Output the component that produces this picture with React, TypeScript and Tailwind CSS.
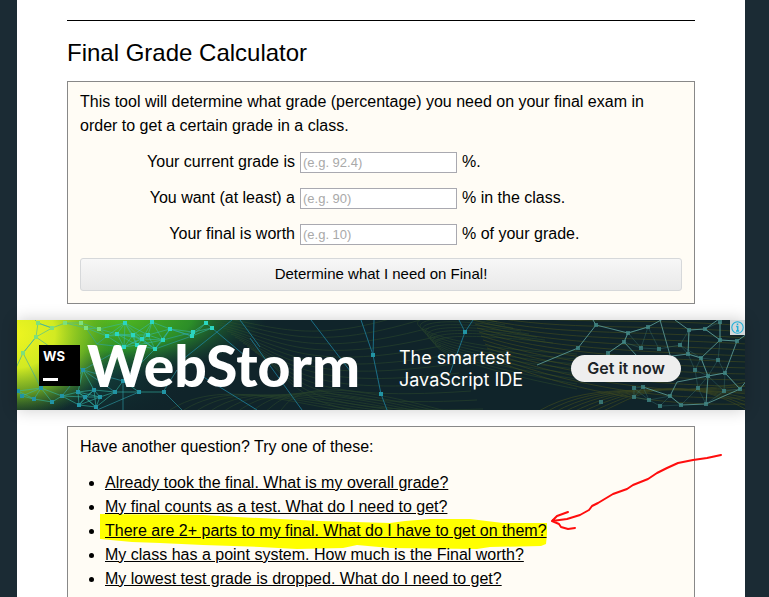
import type { ReactNode } from 'react';

type Point = [number, number];

const LEFT_NODES: Point[] = [
  [21, 3], [19, 17], [6, 33], [35, 8], [48, 3], [64, 3], [69, 8], [82, 9], [90, 16], [100, 14],
  [108, 3], [116, 15], [125, 19], [131, 15], [135, 2], [153, 9], [146, 20], [138, 29], [107, 27],
  [120, 25], [175, 16], [176, 12], [189, 3], [195, 8], [1, 71], [5, 76], [17, 79], [24, 68],
  [35, 82], [45, 76], [61, 72], [68, 77], [79, 87], [83, 77], [62, 85], [98, 72], [106, 61],
  [122, 72], [147, 72], [77, 70], [66, 50],
];

const RIGHT_NODES: Point[] = [
  [579, 5], [561, 28], [611, 13], [631, 7], [607, 22], [591, 33], [624, 28], [642, 29], [672, 10],
  [688, 9], [703, 20], [720, 21], [703, 2], [671, 34], [684, 38], [663, 25], [701, 40], [678, 50],
  [691, 56], [708, 53], [723, 69], [707, 71], [681, 68], [689, 84], [653, 76], [626, 67], [617, 77],
  [617, 68], [643, 86], [664, 85], [584, 82], [632, 80],
];

const MIDDLE_NODES: Point[] = [[356, 35], [364, 74], [448, 12]];

// Joins every pair of nodes that lie closer than `reach`
function meshPath(nodes: Point[], reach: number) {
  let d = '';
  nodes.forEach(([x1, y1], i) => {
    nodes.slice(i + 1).forEach(([x2, y2]) => {
      if (Math.hypot(x2 - x1, y2 - y1) < reach) d += `M${x1} ${y1}L${x2} ${y2}`;
    });
  });
  return d;
}

const range = (n: number) => Array.from({ length: n }, (_, i) => i);

function BannerArt() {
  return (
    <svg className="absolute inset-0 h-full w-full" viewBox="0 0 728 90" preserveAspectRatio="xMinYMid slice" aria-hidden="true">
      <defs>
        <radialGradient id="yellow" gradientUnits="userSpaceOnUse" cx="0" cy="0" r="1" gradientTransform="translate(-4 14) scale(105 86)">
          <stop offset="0" stopColor="#f0f520" />
          <stop offset="0.4" stopColor="#d2ea22" />
          <stop offset="0.7" stopColor="#7fbe20" stopOpacity="0.75" />
          <stop offset="1" stopColor="#3a8a22" stopOpacity="0" />
        </radialGradient>
        <radialGradient id="green" gradientUnits="userSpaceOnUse" cx="0" cy="0" r="1" gradientTransform="translate(85 -4) scale(165 62)">
          <stop offset="0" stopColor="#5cc41e" />
          <stop offset="0.55" stopColor="#2f9a28" stopOpacity="0.9" />
          <stop offset="1" stopColor="#14503a" stopOpacity="0" />
        </radialGradient>
        <radialGradient id="teal" gradientUnits="userSpaceOnUse" cx="0" cy="0" r="1" gradientTransform="translate(60 50) scale(120 60)">
          <stop offset="0" stopColor="#125046" />
          <stop offset="1" stopColor="#10242a" stopOpacity="0" />
        </radialGradient>
      </defs>
      <rect width="728" height="90" fill="#10242a" />
      <rect width="200" height="90" fill="url(#teal)" />
      <rect width="260" height="90" fill="url(#green)" />
      <rect width="120" height="90" fill="url(#yellow)" />

      {/* Contour lines */}
      <g fill="none" stroke="#35552c" strokeWidth="0.7" opacity="0.6">
        {range(13).map(i => (
          <path key={i} d={`M${190 + i * 4} ${-4 + i * 3}C${250 + i * 3} ${2 + i * 5} ${290 - i * 2} ${30 + i * 6} ${400 + i * 6} ${-10 + i * 9}`} />
        ))}
        {range(9).map(i => (
          <path key={i} d={`M${150 + i * 14} 92C${210 + i * 8} ${50 + i * 4} ${300 - i * 3} ${96 - i * 6} ${360 + i * 9} 92`} />
        ))}
        {range(8).map(i => (
          <path key={i} d={`M${480 + i * 8} ${2 + i * 3}C${370 - i * 2} ${-20 + i * 3} ${355 + i * 6} ${24 + i * 2} ${560} ${34 + i * 5}`} />
        ))}
      </g>
      <g fill="none" stroke="#4c541c" strokeWidth="0.8" opacity="0.65">
        {range(14).map(i => (
          <path key={i} d={`M${450 + i * 2} ${-12 + i * 4}C${530} ${8 + i * 4} ${610} ${-4 + i * 7} 730 ${6 + i * 6}`} />
        ))}
        {range(8).map(i => (
          <path key={i} d={`M${520 + i * 9} 92C${580 + i * 4} ${56 + i * 4} ${650} ${80 - i * 5} 730 ${62 + i * 4}`} />
        ))}
      </g>

      {/* Left mesh */}
      <path d={meshPath(LEFT_NODES, 27)} fill="none" stroke="#35b8a8" strokeWidth="0.9" opacity="0.65" />
      <path
        d="M21 3L16 -2M21 3L35 8M19 17L6 33L24 68M6 33L-2 50M19 17L66 50L107 27M66 50L45 76M66 50L106 61M106 61L106 90M138 29L106 61M147 72L165 90M122 72L80 90M98 72L66 50M175 16L153 9M138 29L175 16M69 8L80 24L107 27M90 16L80 24M125 19L138 29L153 9M176 12L146 20M146 72L160 50"
        fill="none" stroke="#2fa3ae" strokeWidth="0.9" opacity="0.65"
      />
      <path
        d="M215 0L165 40M180 53L240 90M223 0L243 27M195 8L233 40M233 18L285 90M294 0L340 60M344 0L356 35M357 0L356 35L364 74L370 90M442 0L448 12L456 0M448 12L433 53"
        fill="none" stroke="#1f87a5" strokeWidth="1" opacity="0.75"
      />
      <g fill="#7de07c">
        {LEFT_NODES.slice(0, 8).map(([x, y]) => <rect key={`${x}-${y}`} x={x - 2} y={y - 2} width="4" height="4" />)}
      </g>
      <g fill="#2bd6c0">
        {LEFT_NODES.slice(8, 24).map(([x, y]) => <rect key={`${x}-${y}`} x={x - 2} y={y - 2} width="4" height="4" />)}
      </g>
      <g fill="#2294a4">
        {LEFT_NODES.slice(24).map(([x, y]) => <rect key={`${x}-${y}`} x={x - 2} y={y - 2} width="4" height="4" />)}
        {MIDDLE_NODES.map(([x, y]) => <rect key={`${x}-${y}`} x={x - 2} y={y - 2} width="4" height="4" />)}
      </g>

      {/* Right mesh */}
      <path d={meshPath(RIGHT_NODES, 25)} fill="none" stroke="#3d7f7c" strokeWidth="0.7" opacity="0.5" />
      <path
        d="M579 5L611 13L631 7L646 -1M643 0L653 35M561 28L579 5L576 0M561 28L520 45M611 13L607 22L591 33M607 22L620 36M658 0L672 10L688 9L703 20L720 21L730 14M688 9L702 -1M672 10L671 34L684 38L703 20L703 2M671 34L655 36M684 38L691 56L708 53L720 21M708 53L723 69L689 84L691 56L660 62L653 76L664 85L689 84M626 67L653 76M723 69L730 60"
        fill="none" stroke="#5fa39d" strokeWidth="1" opacity="0.8"
      />
      <g fill="#3f8583">
        {RIGHT_NODES.map(([x, y]) => <rect key={`${x}-${y}`} x={x - 2} y={y - 2} width="4" height="4" opacity="0.8" />)}
      </g>
    </svg>
  );
}

function Banner() {
  return (
    <aside className="relative my-4 flex h-[90px] items-center pl-[22px] font-['Inter',sans-serif] text-white shadow-[0_0_15px_rgba(0,0,0,0.2)]">
      <BannerArt />
      <div className="relative flex size-[41px] flex-col justify-between bg-black px-1 pt-1 pb-[5px]">
        <span className="text-[13px] leading-[14px] font-bold">WS</span>
        <span className="h-[3px] w-[15px] bg-white" />
      </div>
      <span className="relative ml-[7px] w-[272px] font-['Lato',sans-serif] text-[57px] leading-[60px] font-black">WebStorm</span>
      <p className="relative ml-10 pt-2 text-[18px] leading-[22px] whitespace-nowrap">
        The smartest
        <br />
        JavaScript IDE
      </p>
      <a href="#webstorm" className="relative mt-[7px] mr-16 ml-auto rounded-full bg-[#eeeeee] px-4 text-base leading-[27px] font-semibold whitespace-nowrap text-[#1d2427]">
        Get it now
      </a>
      <a href="#adchoices" aria-label="AdChoices" className="absolute top-0 right-0 bg-[#d4d8da]">
        <svg className="size-[15px]" viewBox="0 0 15 15" fill="none" stroke="#22afd8">
          <circle cx="7.5" cy="7.5" r="5.7" strokeWidth="1.1" />
          <path d="M7.5 3.4v1.7M6.2 6.5h1.5v4.3M6 11h3.2" strokeWidth="1.5" />
        </svg>
      </a>
    </aside>
  );
}

interface FieldProps {
  id: string;
  label: string;
  placeholder: string;
  suffix: string;
}

function Field({ id, label, placeholder, suffix }: FieldProps) {
  return (
    <div className="flex h-6 items-center">
      <label htmlFor={id} className="w-[215px] text-right">{label}</label>
      <input
        id={id}
        type="text"
        placeholder={placeholder}
        className="mx-[5px] h-[21px] w-[157px] border border-[#a9a9b0] bg-white px-[2px] text-[13px] placeholder:text-[#a9a9a9]"
      />
      <span>{suffix}</span>
    </div>
  );
}

function Panel({ children }: { children: ReactNode }) {
  return <section className="isolate border border-[#888888] bg-[#fffcf5] px-3 pt-2 pb-3">{children}</section>;
}

function Marker() {
  return (
    <>
      <svg className="absolute -top-[5px] -left-[5px] -z-10 h-9 w-[448px]" viewBox="0 0 448 36" aria-hidden="true">
        <path
          d="M0 0L103 1L137 3L180 5L220 7L290 9L305 7L330 5L370 5L403 9L447 9V20L446 30L441 32L390 33L377 35L290 34L257 31L243 34L197 35L160 33L103 31L60 29L32 28L0 25Z"
          fill="#ffff00"
        />
      </svg>
      <svg className="absolute -top-[69px] left-[440px] h-[84px] w-[180px]" viewBox="0 0 180 84" aria-hidden="true">
        <path
          d="M176 5L162 8L148 10L133 13L122 18L112 23L103 29L88 35L82 39L68 44L53 53L47 56L44 60L35 65L22 69L7 71M23 62L12 66L7 71L14 74L16 77L23 79L30 78"
          fill="none" stroke="#ff0d0d" strokeWidth="2" strokeLinecap="round" strokeLinejoin="round"
        />
      </svg>
    </>
  );
}

const questions = [
  { text: 'Already took the final. What is my overall grade?', href: '#overall' },
  { text: 'My final counts as a test. What do I need to get?', href: '#counts-as-test' },
  { text: 'There are 2+ parts to my final. What do I have to get on them?', href: '#parts', marked: true },
  { text: 'My class has a point system. How much is the Final worth?', href: '#points' },
  { text: 'My lowest test grade is dropped. What do I need to get?', href: '#dropped' },
];

export default function App() {
  return (
    <div className="h-screen overflow-hidden bg-[#1b2b34] pr-6 pl-[17px] font-['Liberation_Sans',Arial,sans-serif] text-base text-black">
      <main className="min-h-full bg-white pt-5">
        <div className="px-[50px]">
          <hr className="border-black" />
          <h1 className="mt-3 mb-2 text-2xl leading-10">Final Grade Calculator</h1>
          <Panel>
            <form className="flex flex-col gap-3" onSubmit={e => e.preventDefault()}>
              <p>
                This tool will determine what grade (percentage) you need on your final exam in order to get a certain
                grade in a class.
              </p>
              <Field id="current" label="Your current grade is" placeholder="(e.g. 92.4)" suffix="%." />
              <Field id="wanted" label="You want (at least) a" placeholder="(e.g. 90)" suffix="% in the class." />
              <Field id="worth" label="Your final is worth" placeholder="(e.g. 10)" suffix="% of your grade." />
              <button
                type="submit"
                className="h-[33px] rounded-[3px] border border-[#d6d8da] bg-linear-to-b from-[#f7f7f7] to-[#e9e9e9] text-[15px]"
              >
                Determine what I need on Final!
              </button>
            </form>
          </Panel>
        </div>

        <Banner />

        <div className="px-[50px]">
          <Panel>
            <p>Have another question? Try one of these:</p>
            <ul className="mt-3 list-disc pl-[25px]">
              {questions.map(q => (
                <li key={q.href} className="relative">
                  {q.marked && <Marker />}
                  <a href={q.href} className="underline">{q.text}</a>
                </li>
              ))}
            </ul>
          </Panel>
        </div>
      </main>
    </div>
  );
}
